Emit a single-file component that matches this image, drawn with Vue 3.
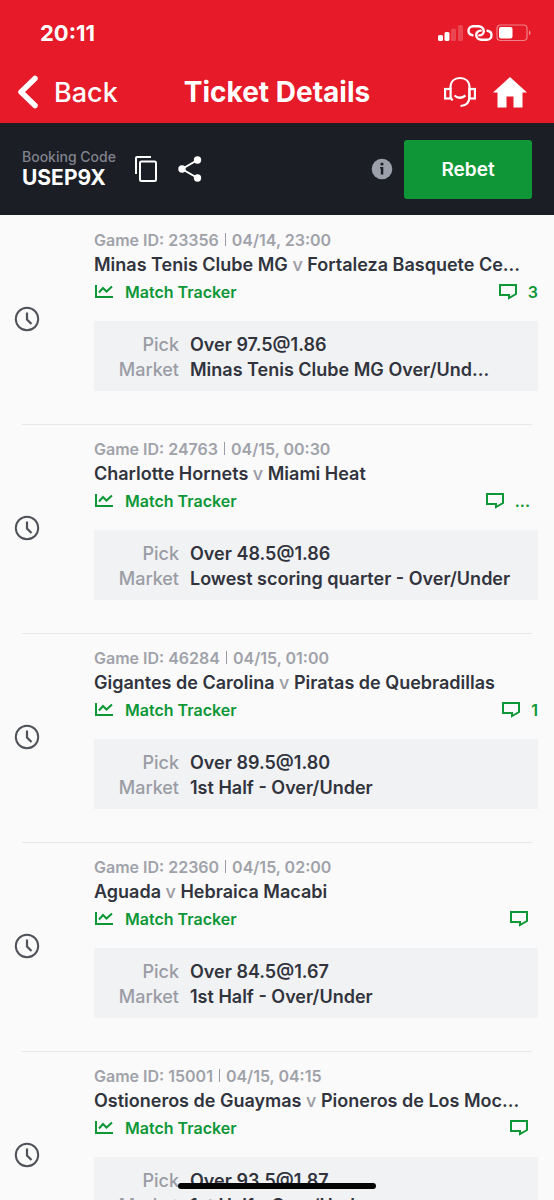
<script setup>
const games = [
  { id: '23356', time: '04/14, 23:00', home: 'Minas Tenis Clube MG', away: 'Fortaleza Basquete Ce...', comments: '3', pick: 'Over 97.5@1.86', market: 'Minas Tenis Clube MG Over/Und...' },
  { id: '24763', time: '04/15, 00:30', home: 'Charlotte Hornets', away: 'Miami Heat', comments: '...', pick: 'Over 48.5@1.86', market: 'Lowest scoring quarter - Over/Under' },
  { id: '46284', time: '04/15, 01:00', home: 'Gigantes de Carolina', away: 'Piratas de Quebradillas', comments: '1', pick: 'Over 89.5@1.80', market: '1st Half - Over/Under' },
  { id: '22360', time: '04/15, 02:00', home: 'Aguada', away: 'Hebraica Macabi', comments: '', pick: 'Over 84.5@1.67', market: '1st Half - Over/Under' },
  { id: '15001', time: '04/15, 04:15', home: 'Ostioneros de Guaymas', away: 'Pioneros de Los Moc...', comments: '', pick: 'Over 93.5@1.87', market: '1st Half - Over/Under' },
]
</script>

<template>
  <div class="screen">
    <header class="top">
      <div class="status">
        <span class="clock">20:11</span>
        <div class="indicators">
          <svg width="26" height="18" viewBox="0 0 26 18" fill="#fff" aria-hidden="true">
            <rect x="0" y="11" width="5" height="6" rx="1.5" />
            <rect x="6.5" y="8" width="5" height="9" rx="1.5" />
            <rect x="13" y="4.5" width="5" height="12.5" rx="1.5" opacity=".2" />
            <rect x="20" y="1" width="5" height="16" rx="1.5" opacity=".2" />
          </svg>
          <svg width="26" height="18" viewBox="0 0 26 18" fill="none" stroke="#fff" stroke-width="2.4" stroke-linecap="round" aria-hidden="true">
            <path d="M5.500 11.200C3 10.800 1.500 9 1.500 6.800C1.500 4.200 3.500 2.200 6.200 2.200H11.500C14.500 2.200 16.800 4.400 16.800 7C16.800 9.600 14.800 11.400 12.300 11.400" />
            <path d="M20.500 6.800C23 7.200 24.500 9 24.500 11.200C24.500 13.800 22.500 15.800 19.800 15.800H14.500C11.500 15.800 9.200 13.600 9.200 11C9.200 8.400 11.200 6.600 13.700 6.600" />
          </svg>
          <svg width="36" height="18" viewBox="0 0 36 18" aria-hidden="true">
            <rect x="1" y="1" width="30" height="15.5" rx="3.5" fill="none" stroke="#fff" stroke-opacity=".45" stroke-width="1.2" />
            <rect x="3" y="3" width="13.5" height="11.5" rx="2" fill="#fff" />
            <path d="M33 6.5C35 7 35 10.5 33 11Z" fill="#fff" opacity=".5" />
          </svg>
        </div>
      </div>
      <nav class="nav">
        <button class="back">
          <svg width="21" height="34" viewBox="0 0 21 34" fill="none" stroke="#fff" stroke-width="5.5" stroke-linecap="round" stroke-linejoin="round" aria-hidden="true">
            <path d="M18 3.500L4 17L18 30.500" />
          </svg>
          Back
        </button>
        <h1>Ticket Details</h1>
        <div class="nav-actions">
          <button aria-label="Customer service">
            <svg width="32" height="32" viewBox="0 0 32 32" fill="none" stroke="#fff" stroke-width="2.2" aria-hidden="true">
              <rect x="1.1" y="13" width="5.5" height="9.5" />
              <rect x="25.4" y="13" width="5.5" height="9.5" />
              <path d="M6.500 13V11.500C6.500 5.500 10.500 2 16 2S25.500 5.500 25.500 11.500V20C25.500 26.500 22 29.800 16.500 30" />
              <path d="M6.500 21L8.500 24.500" />
              <path d="M10.500 19.500Q15.500 24 21.500 19.500" />
            </svg>
          </button>
          <button aria-label="Home">
            <svg width="34" height="32" viewBox="0 0 34 32" fill="#fff" aria-hidden="true">
              <path d="M17 1L34 16.500H29.500V31.500H20.500V20.500H13.500V31.500H4.500V16.500H0Z" />
            </svg>
          </button>
        </div>
      </nav>
    </header>

    <section class="booking">
      <div class="code">
        <span class="code-label">Booking Code</span>
        <strong>USEP9X</strong>
      </div>
      <button class="copy" aria-label="Copy code">
        <svg width="24" height="28" viewBox="0 0 24 28" fill="none" stroke="#fff" stroke-width="2" aria-hidden="true">
          <path d="M2 19V3Q2 2 3 2H17" />
          <rect x="6" y="6.5" width="16" height="19.5" rx="1.5" />
        </svg>
      </button>
      <button class="share" aria-label="Share">
        <svg width="24" height="26" viewBox="0 0 24 26" fill="#fff" aria-hidden="true">
          <path d="M19.500 4L4 13L19.500 22" fill="none" stroke="#fff" stroke-width="2" />
          <circle cx="4" cy="13" r="3.7" />
          <circle cx="19.5" cy="4" r="3.7" />
          <circle cx="19.5" cy="22" r="3.7" />
        </svg>
      </button>
      <button class="info" aria-label="Information">
        <svg width="22" height="22" viewBox="0 0 22 22" aria-hidden="true">
          <circle cx="11" cy="11" r="10.3" fill="#9ca0ab" />
          <circle cx="11" cy="6" r="1.6" fill="#1b1e25" />
          <path d="M9 9H12.300V16.500H9.800V10.500H9Z" fill="#1b1e25" />
        </svg>
      </button>
      <button class="rebet">Rebet</button>
    </section>

    <main class="list">
      <article v-for="game in games" :key="game.id" class="game">
        <svg class="pending" width="26" height="26" viewBox="0 0 26 26" fill="none" stroke="#4f5259" stroke-width="2" aria-hidden="true">
          <circle cx="13" cy="13" r="11.2" />
          <path d="M13 6.500V13.500L17.500 18" stroke-width="2.2" />
        </svg>
        <div class="detail">
          <p class="meta">Game ID: {{ game.id }}<i class="bar"></i>{{ game.time }}</p>
          <h2>{{ game.home }} <span>v</span> {{ game.away }}</h2>
          <div class="links">
            <a href="#" class="tracker">
              <svg width="20" height="16" viewBox="0 0 20 16" fill="none" stroke="#0d9737" stroke-width="2" aria-hidden="true">
                <path d="M2 1V13H19" />
                <path d="M5 8.500L9 4L12.500 7.500L18 2.500" />
              </svg>
              Match Tracker
            </a>
            <a href="#" class="comments" :class="{ empty: !game.comments }" aria-label="Comments">
              <svg width="18" height="18" viewBox="0 0 18 18" fill="none" stroke="#0d9737" stroke-width="2" aria-hidden="true">
                <path d="M1 2H17V11L10 15V12H1Z" />
              </svg>
              <span v-if="game.comments" :class="{ more: game.comments === '...' }">{{ game.comments }}</span>
            </a>
          </div>
          <dl class="bet">
            <dt>Pick</dt>
            <dd>{{ game.pick }}</dd>
            <dt>Market</dt>
            <dd>{{ game.market }}</dd>
          </dl>
        </div>
      </article>
    </main>
    <div class="home-indicator"></div>
  </div>
</template>

<style>
body {
  margin: 0;
  background: #fafafa;
}
</style>

<style scoped>
.screen {
  display: flex;
  flex-direction: column;
  height: 100vh;
  overflow: hidden;
  font-family: Inter, "Liberation Sans", sans-serif;
  color: #31343d;
}
button {
  display: flex;
  align-items: center;
  padding: 0;
  border: 0;
  background: none;
  color: #fff;
  font-family: inherit;
  cursor: pointer;
}
svg {
  display: block;
  flex: none;
}
.top {
  flex: none;
  background: #e61a28;
  color: #fff;
}
.status {
  display: flex;
  align-items: center;
  justify-content: space-between;
  height: 64px;
  padding: 2px 22px 0 40px;
  box-sizing: border-box;
}
.clock {
  font-size: 22px;
  font-weight: 700;
}
.indicators {
  display: flex;
  align-items: center;
  gap: 3px;
}
.nav {
  display: grid;
  grid-template-columns: 1fr auto 1fr;
  align-items: center;
  height: 59px;
  padding: 0 17px 3px;
  box-sizing: border-box;
}
.back {
  gap: 16px;
  font-size: 27px;
  font-weight: 500;
}
h1 {
  margin: 0;
  font-size: 28px;
  line-height: 32px;
  font-weight: 700;
}
.nav-actions {
  display: flex;
  justify-content: flex-end;
  align-items: center;
  gap: 17px;
  padding-right: 10px;
}
.booking {
  flex: none;
  display: flex;
  align-items: center;
  height: 92px;
  padding: 0 22px;
  box-sizing: border-box;
  background: #1b1e25;
}
.code {
  display: flex;
  flex-direction: column;
  color: #fff;
}
.code-label {
  font-size: 14px;
  line-height: 18px;
  font-weight: 500;
  color: #80838d;
}
.code strong {
  font-size: 21px;
  line-height: 24px;
  font-weight: 700;
}
.copy {
  margin-left: 18px;
}
.share {
  margin-left: 20px;
}
.info {
  margin-left: auto;
}
.rebet {
  justify-content: center;
  width: 128px;
  height: 59px;
  margin-left: 11px;
  border-radius: 3px;
  background: #0f9737;
  font-size: 19px;
  font-weight: 600;
}
.list {
  flex: 1;
  min-height: 0;
  padding-top: 1px;
  overflow-y: auto;
  scrollbar-width: none;
  background: #fafafa;
}
.game {
  position: relative;
  display: flex;
  align-items: center;
  gap: 54px;
  padding: 14px 16px 34px 14px;
}
.game:not(:last-child)::after {
  content: "";
  position: absolute;
  right: 22px;
  bottom: 0;
  left: 22px;
  border-bottom: 1px solid #e6e7ea;
}
.pending {
  margin-top: 16px;
}
.detail {
  flex: 1;
  min-width: 0;
}
.meta {
  margin: 0;
  font-size: 16px;
  line-height: 21px;
  font-weight: 600;
  color: #a0a2aa;
}
.bar {
  display: inline-block;
  width: 1px;
  height: 13px;
  margin: 0 6px;
  background: #9a9ca5;
}
h2 {
  margin: 0;
  font-size: 18px;
  line-height: 28px;
  font-weight: 600;
  white-space: nowrap;
}
h2 span {
  font-weight: 500;
  color: #9a9ca5;
}
.links {
  display: flex;
  justify-content: space-between;
  align-items: center;
  height: 26px;
}
.links a {
  display: flex;
  align-items: center;
  color: #0d9737;
  font-size: 16px;
  font-weight: 600;
  text-decoration: none;
}
.tracker,
.comments {
  gap: 11px;
}
.comments.empty {
  padding-right: 10px;
}
.comments .more {
  padding-right: 8px;
}
.bet {
  display: grid;
  grid-template-columns: 85px 1fr;
  column-gap: 11px;
  margin: 16px 0 0;
  padding: 11px 0 9px;
  background: #f1f2f4;
  font-size: 18px;
  line-height: 25px;
  font-weight: 600;
  white-space: nowrap;
}
dt {
  text-align: right;
  font-weight: 500;
  color: #9a9ca5;
}
dd {
  margin: 0;
}
.home-indicator {
  position: fixed;
  bottom: 11px;
  left: 50%;
  width: 198px;
  height: 6px;
  margin-left: -99px;
  border-radius: 3px;
  background: #050506;
}
</style>
